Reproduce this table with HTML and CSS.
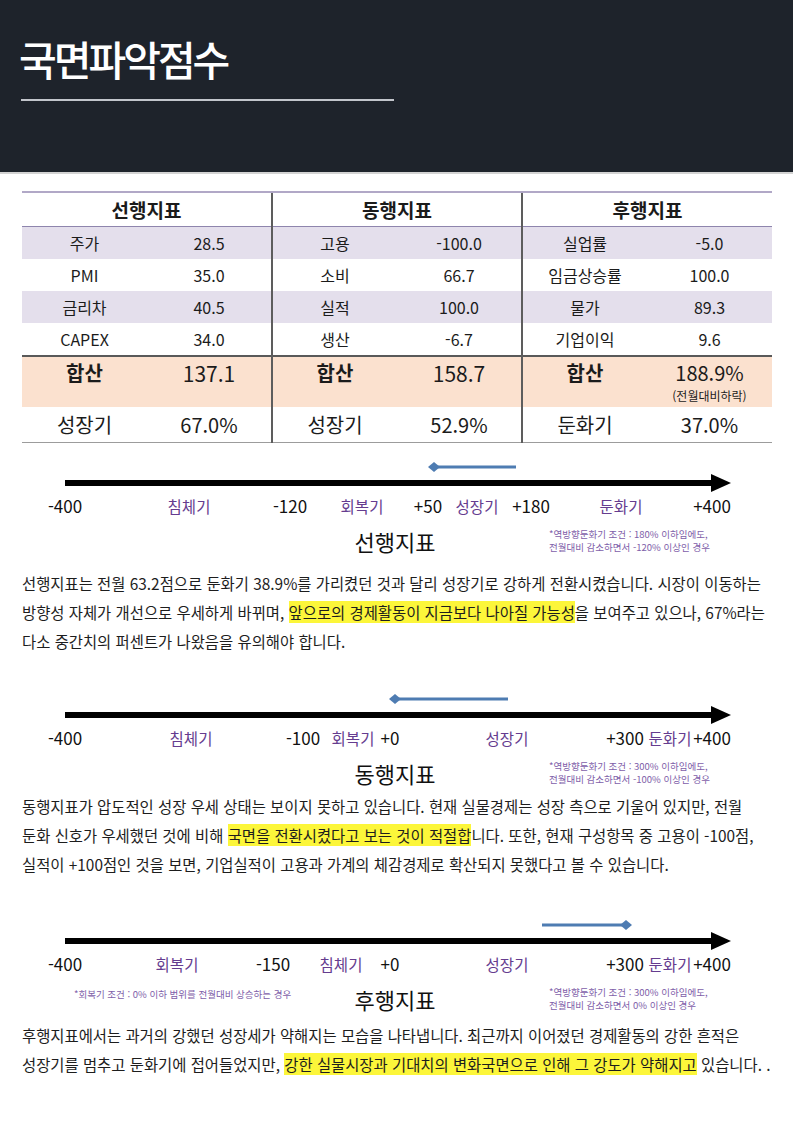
FILE: index.html
```html
<!DOCTYPE html>
<html lang="ko">
<head>
<meta charset="utf-8">
<title>국면파악점수</title>
<link rel="stylesheet" href="styles.css">
</head>
<body>
<header class="banner">
  <h1 class="banner-title">국면파악점수</h1>
  <div class="banner-rule"></div>
</header>

<table class="score">
  <thead>
    <tr><th colspan="2">선행지표</th><th colspan="2" class="sep">동행지표</th><th colspan="2" class="sep">후행지표</th></tr>
  </thead>
  <tbody>
    <tr class="alt"><td>주가</td><td>28.5</td><td class="sep">고용</td><td>-100.0</td><td class="sep">실업률</td><td>-5.0</td></tr>
    <tr><td>PMI</td><td>35.0</td><td class="sep">소비</td><td>66.7</td><td class="sep">임금상승률</td><td>100.0</td></tr>
    <tr class="alt"><td>금리차</td><td>40.5</td><td class="sep">실적</td><td>100.0</td><td class="sep">물가</td><td>89.3</td></tr>
    <tr><td>CAPEX</td><td>34.0</td><td class="sep">생산</td><td>-6.7</td><td class="sep">기업이익</td><td>9.6</td></tr>
    <tr class="sum"><td class="lbl">합산</td><td>137.1</td><td class="sep lbl">합산</td><td>158.7</td><td class="sep lbl">합산</td><td><span class="val">188.9%</span><span class="sub">(전월대비하락)</span></td></tr>
    <tr class="phase"><td>성장기</td><td>67.0%</td><td class="sep">성장기</td><td>52.9%</td><td class="sep">둔화기</td><td>37.0%</td></tr>
  </tbody>
</table>

<section class="axis axis-lead">
  <svg class="axis-svg" width="793" height="40" viewBox="0 0 793 40">
    <line x1="438" y1="10" x2="516" y2="10" stroke="#4e7cb2" stroke-width="3"/>
    <polygon points="428,10 434,5 440,10 434,15" fill="#4e7cb2"/>
    <line x1="65" y1="26" x2="714" y2="26" stroke="#000" stroke-width="6"/>
    <polygon points="711,17 731,26 711,35" fill="#000"/>
  </svg>
  <span class="tick" style="left:65px">-400</span>
  <span class="tick stage" style="left:189px">침체기</span>
  <span class="tick" style="left:290px">-120</span>
  <span class="tick stage" style="left:362px">회복기</span>
  <span class="tick" style="left:428px">+50</span>
  <span class="tick stage" style="left:477px">성장기</span>
  <span class="tick" style="left:531px">+180</span>
  <span class="tick stage" style="left:621px">둔화기</span>
  <span class="tick" style="left:712px">+400</span>
  <div class="axis-title">선행지표</div>
  <div class="note">*역방향둔화기 조건 : 180% 이하임에도,<br>전월대비 감소하면서 -120% 이상인 경우</div>
</section>

<p class="desc desc-lead">선행지표는 전월 63.2점으로 둔화기 38.9%를 가리켰던 것과 달리 성장기로 강하게 전환시켰습니다. 시장이 이동하는<br>방향성 자체가 개선으로 우세하게 바뀌며, <mark class="hl">앞으로의 경제활동이 지금보다 나아질 가능성</mark>을 보여주고 있으나, 67%라는<br>다소 중간치의 퍼센트가 나왔음을 유의해야 합니다.</p>

<section class="axis axis-coin">
  <svg class="axis-svg" width="793" height="40" viewBox="0 0 793 40">
    <line x1="399" y1="10" x2="508" y2="10" stroke="#4e7cb2" stroke-width="3"/>
    <polygon points="389,10 395,5 401,10 395,15" fill="#4e7cb2"/>
    <line x1="65" y1="26" x2="714" y2="26" stroke="#000" stroke-width="6"/>
    <polygon points="711,17 731,26 711,35" fill="#000"/>
  </svg>
  <span class="tick" style="left:65px">-400</span>
  <span class="tick stage" style="left:191px">침체기</span>
  <span class="tick" style="left:303px">-100</span>
  <span class="tick stage" style="left:353px">회복기</span>
  <span class="tick" style="left:390px">+0</span>
  <span class="tick stage" style="left:507px">성장기</span>
  <span class="tick" style="left:625px">+300</span>
  <span class="tick stage" style="left:670px">둔화기</span>
  <span class="tick" style="left:712px">+400</span>
  <div class="axis-title">동행지표</div>
  <div class="note">*역방향둔화기 조건 : 300% 이하임에도,<br>전월대비 감소하면서 -100% 이상인 경우</div>
</section>

<p class="desc">동행지표가 압도적인 성장 우세 상태는 보이지 못하고 있습니다. 현재 실물경제는 성장 측으로 기울어 있지만, 전월<br>둔화 신호가 우세했던 것에 비해 <mark class="hl">국면을 전환시켰다고 보는 것이 적절합</mark>니다. 또한, 현재 구성항목 중 고용이 -100점,<br>실적이 +100점인 것을 보면, 기업실적이 고용과 가계의 체감경제로 확산되지 못했다고 볼 수 있습니다.</p>

<section class="axis axis-lag">
  <svg class="axis-svg" width="793" height="40" viewBox="0 0 793 40">
    <line x1="542" y1="10" x2="622" y2="10" stroke="#4e7cb2" stroke-width="3"/>
    <polygon points="620,10 626,5 632,10 626,15" fill="#4e7cb2"/>
    <line x1="65" y1="26" x2="714" y2="26" stroke="#000" stroke-width="6"/>
    <polygon points="711,17 731,26 711,35" fill="#000"/>
  </svg>
  <span class="tick" style="left:65px">-400</span>
  <span class="tick stage" style="left:177px">회복기</span>
  <span class="tick" style="left:273px">-150</span>
  <span class="tick stage" style="left:341px">침체기</span>
  <span class="tick" style="left:390px">+0</span>
  <span class="tick stage" style="left:507px">성장기</span>
  <span class="tick" style="left:625px">+300</span>
  <span class="tick stage" style="left:670px">둔화기</span>
  <span class="tick" style="left:712px">+400</span>
  <div class="note note-left">*회복기 조건 : 0% 이하 범위를 전월대비 상승하는 경우</div>
  <div class="axis-title">후행지표</div>
  <div class="note">*역방향둔화기 조건 : 300% 이하임에도,<br>전월대비 감소하면서 0% 이상인 경우</div>
</section>

<p class="desc desc-last">후행지표에서는 과거의 강했던 성장세가 약해지는 모습을 나타냅니다. 최근까지 이어졌던 경제활동의 강한 흔적은<br>성장기를 멈추고 둔화기에 접어들었지만, <mark class="hl">강한 실물시장과 기대치의 변화국면으로 인해 그 강도가 약해지고</mark> 있습니다. .</p>
</body>
</html>
```

FILE: styles.css
```css
html, body {
  margin: 0;
  padding: 0;
  background: #ffffff;
}

body {
  width: 793px;
  font-family: "Noto Sans CJK KR", "Noto Sans", sans-serif;
  color: #1b1b1b;
}

/* ---------- banner ---------- */
.banner {
  height: 136px;
  padding: 36px 0 0 19px;
  background: #1e232b;
  border-bottom: 2px solid #d3d3d3;
}

.banner-title {
  margin: 0;
  font-size: 41px;
  line-height: 44px;
  font-weight: 500;
  letter-spacing: -3px;
  color: #ffffff;
}

.banner-rule {
  width: 373px;
  margin: 19px 0 0 2px;
  border-top: 2px solid #c2c5cb;
}

/* ---------- score table ---------- */
.score {
  width: 750px;
  margin: 17px 22px 0;
  border-collapse: collapse;
  table-layout: fixed;
}

.score th {
  height: 33px;
  padding: 0;
  font-size: 19px;
  font-weight: 700;
  text-align: center;
  border-top: 2px solid #b1a8c7;
  border-bottom: 1px solid #8e85ad;
}

.score td {
  height: 32px;
  padding: 0;
  font-size: 16px;
  line-height: 20px;
  text-align: center;
  vertical-align: middle;
}

.score .sep {
  border-left: 2px solid #5d5d5d;
}

.score tr.alt td {
  background: #e4dfec;
}

.score tr.sum td {
  height: 46px;
  padding: 4px 0 0;
  vertical-align: top;
  background: #fbe1cf;
  border-top: 2px solid #595959;
  font-size: 21px;
  line-height: 24px;
}

.score tr.sum td.lbl {
  font-size: 20px;
  font-weight: 700;
}

.score .val {
  display: block;
  font-size: 20px;
  line-height: 24px;
}

.score .sub {
  display: block;
  margin-top: 3px;
  font-size: 12px;
  line-height: 16px;
}

.score tr.phase td {
  height: 35px;
  padding: 0;
  font-size: 20px;
  line-height: 24px;
  border-bottom: 1px solid #9c9c9c;
}

/* ---------- axis diagrams ---------- */
.axis {
  position: relative;
  width: 793px;
  height: 105px;
}

.axis-lead { margin-top: 14px; }
.axis-coin { margin-top: 33px; }
.axis-lag  { margin-top: 36px; }

.axis-svg {
  position: absolute;
  top: 0;
  left: 0;
}

.tick {
  position: absolute;
  top: 38px;
  line-height: 22px;
  font-size: 17px;
  white-space: nowrap;
  transform: translateX(-50%);
  color: #111111;
}

.tick.stage {
  font-size: 15.5px;
  color: #653c8f;
}

.axis-title {
  position: absolute;
  top: 70px;
  left: 395px;
  transform: translateX(-50%);
  font-size: 22px;
  line-height: 28px;
  white-space: nowrap;
  color: #111111;
}

.note {
  position: absolute;
  top: 71px;
  left: 549px;
  font-size: 9.5px;
  line-height: 13px;
  white-space: nowrap;
  color: #7e5ea9;
}

.note.note-left {
  top: 73px;
  left: 74px;
}

/* ---------- paragraphs ---------- */
.desc {
  margin: -2px 0 0;
  padding-left: 22px;
  font-size: 15.4px;
  line-height: 29px;
  white-space: nowrap;
  color: #1d1d1d;
}

.desc.desc-lead {
  margin-top: 7px;
}

.desc.desc-last {
  margin-top: 1px;
}

.hl {
  background: #fcf63a;
  color: inherit;
  padding: 0;
}
```
